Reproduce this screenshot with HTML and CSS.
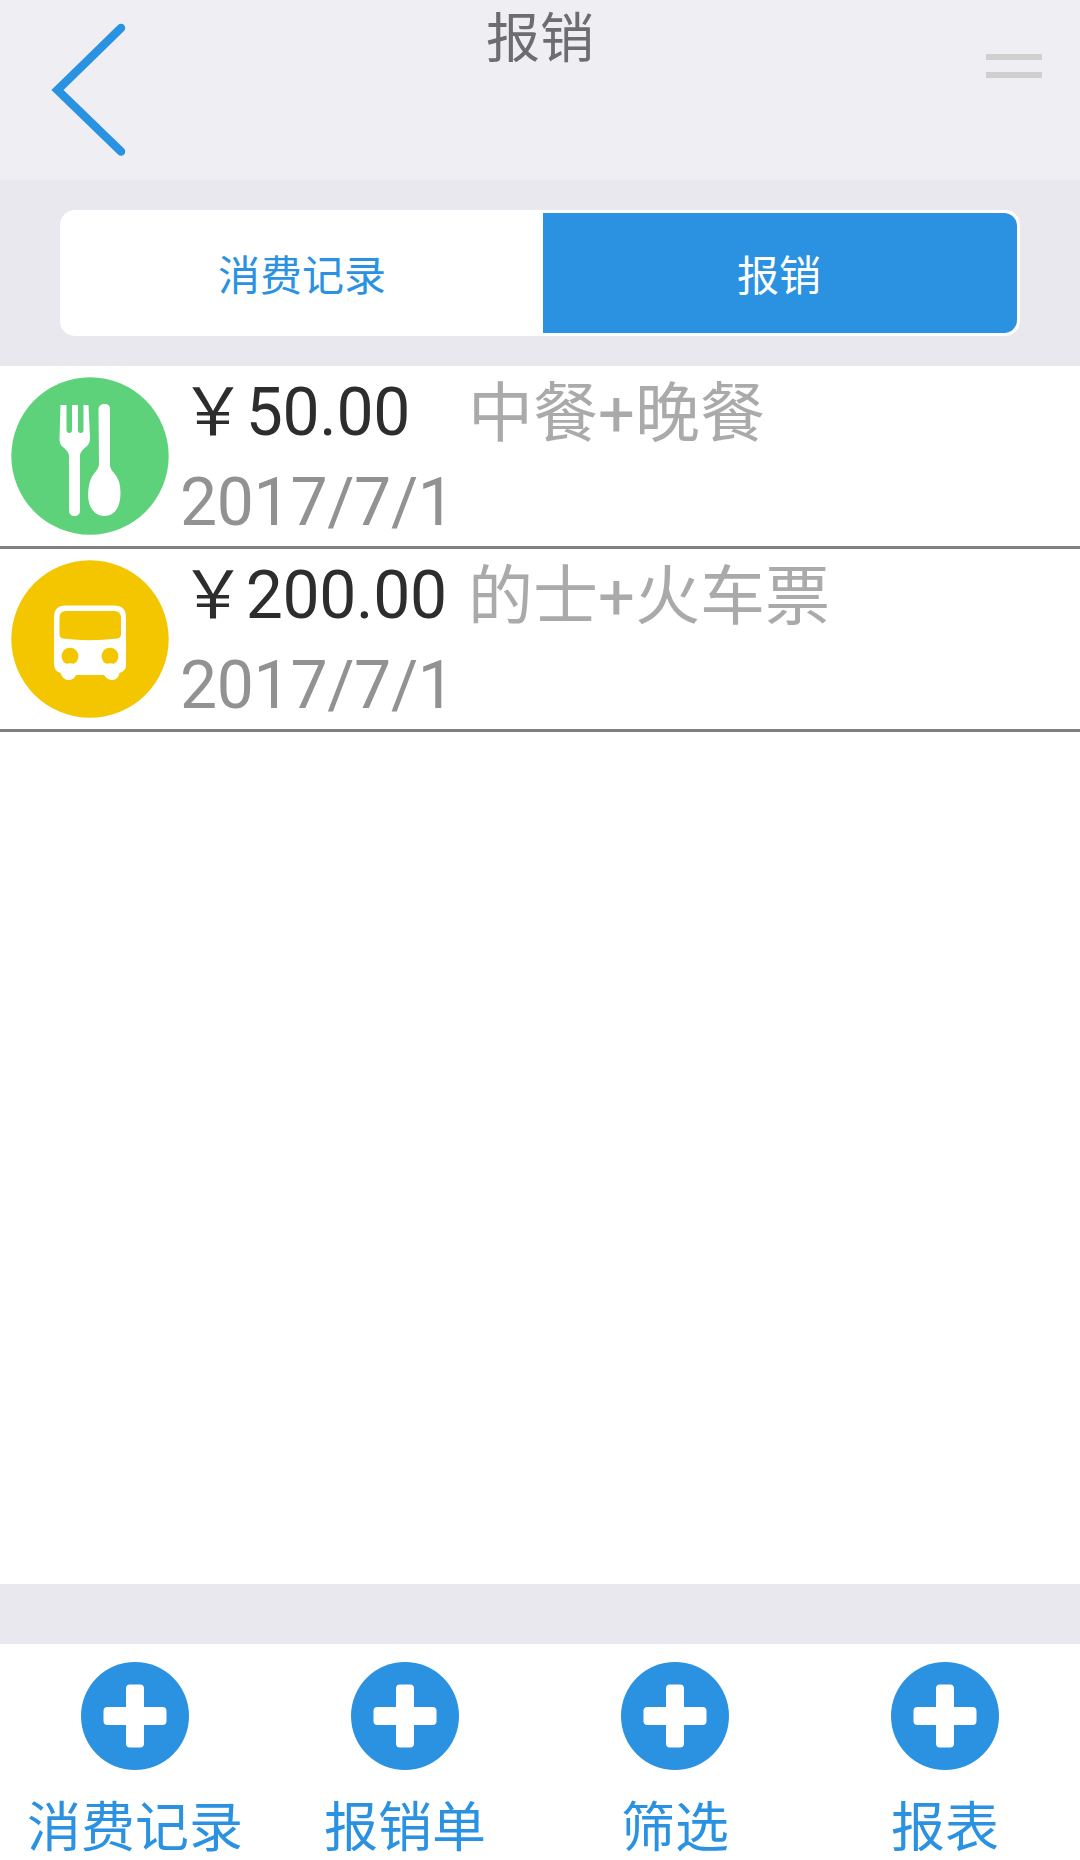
FILE: index.html
```html
<!DOCTYPE html>
<html lang="zh-CN">
<head>
<meta charset="utf-8">
<title>报销</title>
<link rel="stylesheet" href="styles.css">
</head>
<body>
<div class="app">
  <header class="header">
    <svg class="back" viewBox="0 0 180 180"><path d="M121 28 57.500 90 121 151.500" fill="none" stroke="#2a93e1" stroke-width="8.500" stroke-linecap="round" stroke-linejoin="miter"/></svg>
    <h1 class="title">报销</h1>
    <div class="menu"><span class="menu-line"></span><span class="menu-line"></span></div>
  </header>
  <nav class="tabs">
    <div class="segment">
      <span class="tab">消费记录</span>
      <span class="tab tab-active">报销</span>
    </div>
  </nav>
  <main class="list">
    <section class="row">
      <svg class="icon" viewBox="0 0 180 180">
        <circle cx="90" cy="90" r="78.700" fill="#5dd27a"/>
        <path fill="#fff" d="M60.500 39H66.500V64Q66.500 67 69.500 67Q72 67 72 64V39H78V64Q78 67 80.500 67Q83.500 67 83.500 64V39H88.500L90 72Q90 78 86 81Q80 85 80 90V144Q80 150 74.500 150Q69 150 69 144V90Q69 86 63 81Q59.500 79 59.500 73Z"/>
        <path fill="#fff" d="M98.500 43Q99 38 104.500 38Q110 38 110 43V99Q110 103 114 107Q120.500 114 120.500 127C120.500 142 114 150 104.500 150C95 150 88 142 88 128Q88.500 114 94.500 107Q99 102 99 98Z"/>
      </svg>
      <div class="details">
        <div class="line"><span class="amount">￥50.00</span><span class="desc">中餐+晚餐</span></div>
        <div class="date">2017/7/1</div>
      </div>
    </section>
    <section class="row">
      <svg class="icon" viewBox="0 0 180 180">
        <circle cx="90" cy="90" r="78.700" fill="#f3c600"/>
        <path fill="#fff" d="M66 56.500H114Q126 56.500 126 68V116Q126 122 119.500 124Q118 131 112.500 131Q107 131 104 126H76Q74 131 68 131Q63 131 60.500 124Q54 122 54 115V68Q54 56.500 66 56.500Z"/>
        <path fill="#f3c600" d="M66 62H114Q121 62 121 69V85Q121 89 117 89.500Q90 93 63 89.500Q59.500 89 59.500 85V69Q59.500 62 66 62Z"/>
        <path fill="#f3c600" d="M66.500 114.800A8.400 8.400 0 1 1 73.500 114.800Q70 113.800 66.500 114.800ZM106.500 114.800A8.400 8.400 0 1 1 113.500 114.800Q110 113.800 106.500 114.800Z"/>
      </svg>
      <div class="details">
        <div class="line"><span class="amount">￥200.00</span><span class="desc">的士+火车票</span></div>
        <div class="date">2017/7/1</div>
      </div>
    </section>
  </main>
  <footer class="footer">
    <div class="action"><svg class="plus" viewBox="0 0 108 108"><circle cx="54" cy="54" r="54" fill="#2b92e1"/><path d="M49 22.500h10q4 0 4 4v18.500h18.500q4 0 4 4v10q0 4-4 4H63v18.500q0 4-4 4H49q-4 0-4-4V63H26.500q-4 0-4-4V49q0-4 4-4H45V26.500q0-4 4-4Z" fill="#fff"/></svg><span class="label">消费记录</span></div>
    <div class="action"><svg class="plus" viewBox="0 0 108 108"><circle cx="54" cy="54" r="54" fill="#2b92e1"/><path d="M49 22.500h10q4 0 4 4v18.500h18.500q4 0 4 4v10q0 4-4 4H63v18.500q0 4-4 4H49q-4 0-4-4V63H26.500q-4 0-4-4V49q0-4 4-4H45V26.500q0-4 4-4Z" fill="#fff"/></svg><span class="label">报销单</span></div>
    <div class="action"><svg class="plus" viewBox="0 0 108 108"><circle cx="54" cy="54" r="54" fill="#2b92e1"/><path d="M49 22.500h10q4 0 4 4v18.500h18.500q4 0 4 4v10q0 4-4 4H63v18.500q0 4-4 4H49q-4 0-4-4V63H26.500q-4 0-4-4V49q0-4 4-4H45V26.500q0-4 4-4Z" fill="#fff"/></svg><span class="label">筛选</span></div>
    <div class="action"><svg class="plus" viewBox="0 0 108 108"><circle cx="54" cy="54" r="54" fill="#2b92e1"/><path d="M49 22.500h10q4 0 4 4v18.500h18.500q4 0 4 4v10q0 4-4 4H63v18.500q0 4-4 4H49q-4 0-4-4V63H26.500q-4 0-4-4V49q0-4 4-4H45V26.500q0-4 4-4Z" fill="#fff"/></svg><span class="label">报表</span></div>
  </footer>
</div>
</body>
</html>
```
FILE: styles.css
```css
* { box-sizing: border-box; }
body { margin: 0; background: #fff; font-family: Roboto, "Noto Sans CJK SC", sans-serif; }
svg { display: block; }
.app { width: 1080px; height: 1860px; display: flex; flex-direction: column; overflow: hidden; }

.header { height: 180px; display: grid; grid-template-columns: 180px 1fr 180px; background: #efeef3; }
.back { width: 180px; height: 180px; }
.title { margin: 0; padding-top: 8px; font-size: 54px; font-weight: 400; line-height: 64px; text-align: center; color: #6d6c71; }
.menu { display: flex; flex-direction: column; gap: 12px; padding: 54px 38px 0 86px; }
.menu-line { height: 6px; background: #cfcfcf; }

.tabs { height: 186px; padding: 30px 60px; background: #e9e8ee; }
.segment { height: 126px; padding: 3px; display: grid; grid-template-columns: 480px 474px; background: #fff; border-radius: 15px; }
.tab { height: 120px; padding: 4px 2px 0 0; font-size: 42px; line-height: 120px; text-align: center; color: #2b92e1; }
.tab-active { background: #2b92e1; color: #fff; border-radius: 0 13px 13px 0; }

.list { flex: 1; }
.row { height: 183px; display: flex; border-bottom: 3px solid #808080; }
.icon { width: 180px; height: 180px; flex: none; }
.details { flex: 1; padding-top: 2px; }
.line { display: flex; height: 90px; line-height: 90px; }
.amount { width: 288px; font-size: 66px; color: #2d2d2d; }
.amount, .date { white-space: nowrap; letter-spacing: -0.3px; }
.desc { padding-top: 1px; font-size: 65px; color: #aaa; }
.date { font-size: 66px; line-height: 90px; color: #929292; }

.footer { height: 276px; display: grid; grid-template-columns: repeat(4, 1fr); border-top: 60px solid #e9e8ee; background: #fff; }
.action { display: flex; flex-direction: column; align-items: center; padding-top: 18px; }
.plus { width: 108px; height: 108px; }
.label { margin-top: 27px; font-size: 54px; line-height: 64px; color: #2b92e1; white-space: nowrap; }
```
